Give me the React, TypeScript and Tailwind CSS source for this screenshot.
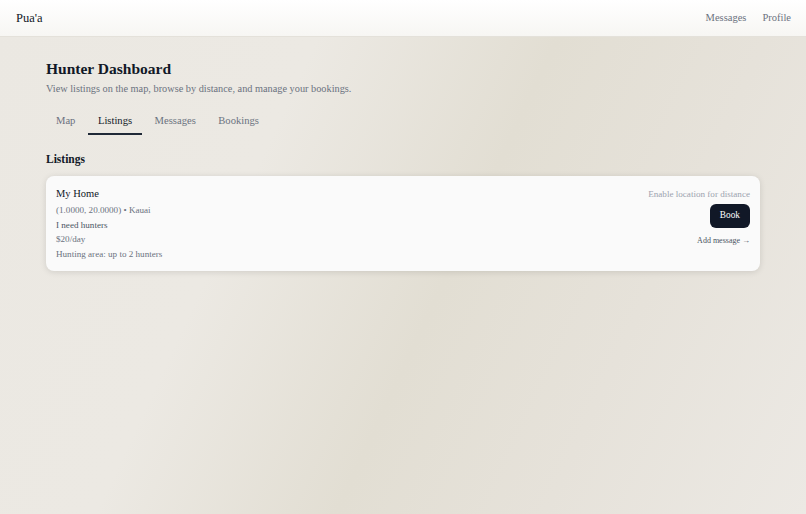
export default function App() {
  const serif = { fontFamily: '"Liberation Serif", "Times New Roman", serif' };
  return (
    <div
      className="min-h-[514px] w-full bg-[linear-gradient(115deg,#ebe8e2_0%,#ece9e3_32%,#e2ded3_55%,#e6e2da_75%,#ece9e4_100%)] text-[#111827]"
      style={serif}
    >
      <header className="flex h-[37px] items-center justify-between border-b border-[#e4e1da] bg-[linear-gradient(180deg,#ffffff_0%,#f7f6f3_100%)] pl-4 pr-[15px]">
        <div className="text-[12.5px] leading-[16px] text-[#111827]">Pua'a</div>
        <nav className="flex items-center gap-[16px] text-[10.5px] leading-[14px] text-[#6b7280]">
          <span>Messages</span>
          <span>Profile</span>
        </nav>
      </header>
      <main className="px-[46px] pt-[22px]">
        <h1 className="text-[15.5px] font-bold leading-[20px]">Hunter Dashboard</h1>
        <p className="mt-[3px] text-[10.3px] leading-[14px] text-[#6b7280]">
          View listings on the map, browse by distance, and manage your bookings.
        </p>
        <div className="mt-[13px] flex gap-[2.5px] text-[10.6px] leading-[14px]">
          <button className="px-[10px] pb-[7px] pt-[5px] text-[#6b7280]">Map</button>
          <button className="border-b-2 border-[#1f2937] px-[10px] pb-[5px] pt-[5px] text-[#111827]">Listings</button>
          <button className="px-[10px] pb-[7px] pt-[5px] text-[#6b7280]">Messages</button>
          <button className="px-[10px] pb-[7px] pt-[5px] text-[#6b7280]">Bookings</button>
        </div>
        <h2 className="mt-[16px] text-[11.5px] font-bold leading-[16px]">Listings</h2>
        <div className="mt-[9px] flex justify-between rounded-[8px] bg-[#fafafa] px-[10px] pb-[9px] pt-[11px] shadow-[0_1px_6px_rgba(0,0,0,0.12)]">
          <div className="flex flex-col">
            <div className="text-[10.5px] leading-[14px] text-[#111827]">My Home</div>
            <div className="mt-[2px] text-[9.1px] leading-[14.7px] text-[#6b7280]">(1.0000, 20.0000) • Kauai</div>
            <div className="text-[9.1px] leading-[14.7px] text-[#4b5563]">I need hunters</div>
            <div className="text-[9.1px] leading-[14.7px] text-[#6b7280]">$20/day</div>
            <div className="text-[9.1px] leading-[14.7px] text-[#6b7280]">Hunting area: up to 2 hunters</div>
          </div>
          <div className="flex flex-col items-end">
            <div className="text-[9.1px] leading-[14px] text-[#9ca3af]">Enable location for distance</div>
            <button className="mt-[3px] h-[24px] rounded-[6px] bg-[#111827] px-[10px] text-[9.3px] text-white">Book</button>
            <div className="mt-[7px] text-[8px] leading-[12px] text-[#4b5563]">Add message →</div>
          </div>
        </div>
      </main>
    </div>
  );
}
